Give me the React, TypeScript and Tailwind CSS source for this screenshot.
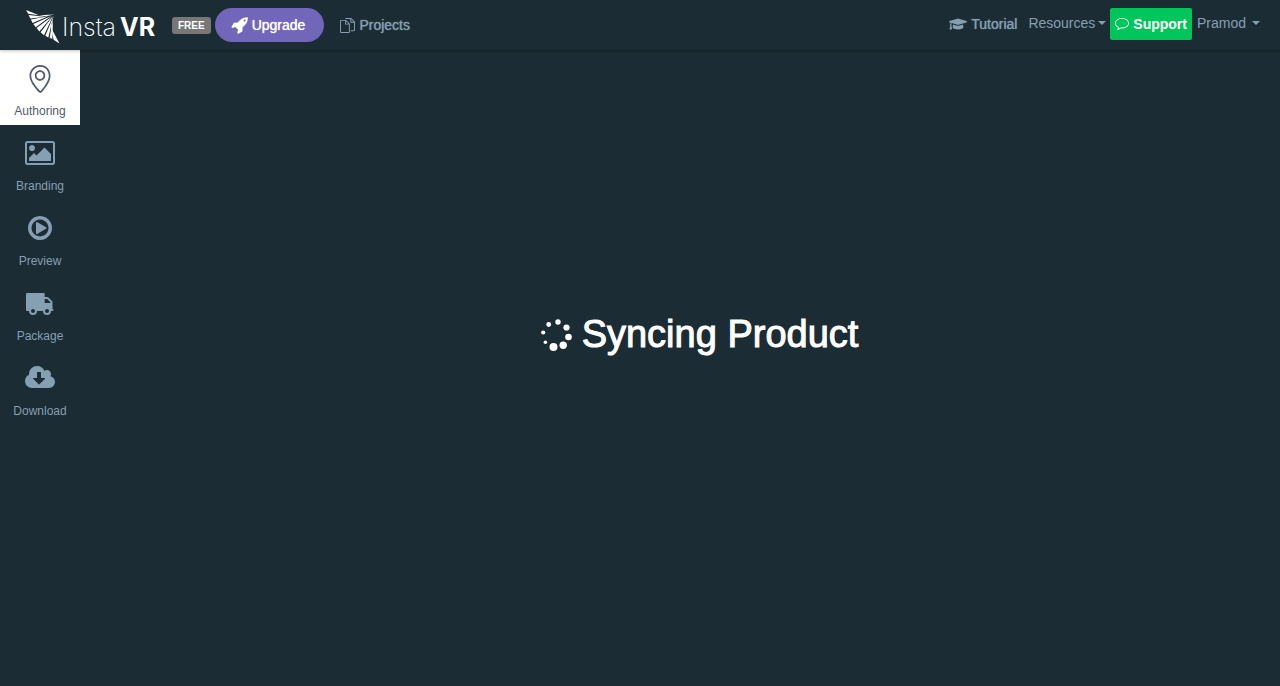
import type { ReactNode } from "react";
import { FaGraduationCap } from "react-icons/fa";
import { SlDocs, SlBubble, SlLocationPin } from "react-icons/sl";

function LogoMark() {
  return (
    <svg viewBox="0 0 34 34" className="h-[34px] w-[34px] shrink-0 fill-white" aria-hidden="true">
      <path d="M0 0 L13 5.200 L28.500 4.600 L20 6.300 L2.200 3.800 Z" />
      <path d="M2.600 4.900 L19 6.700 L4.400 8.600 Z" />
      <path d="M4.800 9.600 L22 6.300 L6.700 13 Z" />
      <path d="M7.400 14 L25 6 L9.700 17.200 Z" />
      <path d="M10.600 18 L26 6.500 L13.400 21.600 Z" />
      <path d="M14.600 22.200 L27 6 L18 25.300 Z" />
      <path d="M19.300 25.700 L27.500 6 L22.300 27.600 Z" />
      <path d="M23.600 27.800 L27 9 L26.300 29 Z" />
      <path d="M28.700 4.600 L25.700 13 L26.300 20 L33.500 33.500 L27.600 29.700 L24.800 16 Z" />
    </svg>
  );
}

function RocketIcon() {
  return (
    <svg viewBox="0 0 1664 1792" className="h-[18px] w-[17px] fill-current" aria-hidden="true">
      <path d="M1440 448q0-40-28-68t-68-28-68 28-28 68 28 68 68 28 68-28 28-68zm224-288q0 249-75.500 430.500t-253.500 360.500q-81 80-195 176l-20 379q-2 16-16 26l-384 224q-7 4-16 4-12 0-23-9l-64-64q-13-14-8-32l85-276-281-281-276 85q-3 1-9 1-14 0-23-9l-64-64q-17-19-5-39l224-384q10-14 26-16l379-20q96-114 176-195 188-187 358-258t431-71q14 0 24 9.500t10 22.500z" />
    </svg>
  );
}

function PictureIcon() {
  return (
    <svg viewBox="0 0 1920 1792" className="h-7 w-[30px] fill-current" aria-hidden="true">
      <path d="M640 576q0 80-56 136t-136 56-136-56-56-136 56-136 136-56 136 56 56 136zm1024 384v448h-1408v-192l320-320 160 160 512-512zm96-704h-1600q-13 0-22.5 9.5t-9.5 22.5v1216q0 13 9.5 22.5t22.5 9.5h1600q13 0 22.5-9.5t9.5-22.5v-1216q0-13-9.5-22.5t-22.5-9.5zm160 32v1216q0 66-47 113t-113 47h-1600q-66 0-113-47t-47-113v-1216q0-66 47-113t113-47h1600q66 0 113 47t47 113z" />
    </svg>
  );
}

function PlayIcon() {
  return (
    <svg viewBox="0 0 1792 1792" className="h-7 w-7 fill-current" aria-hidden="true">
      <path d="M1312 896q0 37-32 55l-544 320q-15 9-32 9-16 0-32-8-32-19-32-56v-640q0-37 32-56 33-18 64 1l544 320q32 18 32 55zm128 0q0-148-73-273t-198-198-273-73-273 73-198 198-73 273 73 273 198 198 273 73 273-73 198-198 73-273zm224 0q0 209-103 385.5t-279.5 279.5-385.5 103-385.5-103-279.5-279.5-103-385.5 103-385.5 279.5-279.5 385.5-103 385.5 103 279.5 279.5 103 385.5z" />
    </svg>
  );
}

function TruckIcon() {
  return (
    <svg viewBox="0 0 28 28" className="h-7 w-7 fill-current" aria-hidden="true">
      <path
        fillRule="evenodd"
        d="M1 4H17.800Q18.700 4 18.700 5V8H21Q22 8 22.700 8.700L25.800 11.800Q26.500 12.500 26.500 13.500V20Q27.500 20 27.500 21T26.500 22H25A4 4 0 0 1 17 22H11A4 4 0 0 1 3 22H1Q0 22 0 21V5Q0 4 1 4ZM18.700 10V14H24.600V13.500L21.500 10.200Q21.300 10 21 10ZM5 22A2 2 0 1 0 9 22A2 2 0 1 0 5 22ZM19 22A2 2 0 1 0 23 22A2 2 0 1 0 19 22Z"
      />
    </svg>
  );
}

function CloudIcon() {
  return (
    <svg viewBox="0 0 1920 1792" className="h-7 w-[30px] fill-current" aria-hidden="true">
      <path d="M1280 928q0-14-9-23t-23-9h-224v-352q0-13-9.500-22.500t-22.500-9.500h-192q-13 0-22.500 9.500t-9.500 22.500v352h-224q-13 0-22.500 9.500t-9.500 22.500q0 14 9 23l352 352q9 9 23 9t23-9l351-351q10-12 10-24zm640 224q0 159-112.500 271.500t-271.500 112.500h-1088q-185 0-316.500-131.500t-131.500-316.500q0-130 70-240t188-165q-2-30-2-43 0-212 150-362t362-150q156 0 285.500 87t188.500 231q71-62 166-62 106 0 181 75t75 181q0 76-41 138 130 31 213.500 135.500t83.500 238.500z" />
    </svg>
  );
}

function Spinner() {
  return (
    <svg viewBox="0 0 34 34" className="h-[34px] w-[34px] fill-white" aria-hidden="true">
      <circle cx="18" cy="5" r="2.700" />
      <circle cx="26.500" cy="10.500" r="3.100" />
      <circle cx="28.500" cy="20" r="3.300" />
      <circle cx="23.200" cy="28.300" r="3.700" />
      <circle cx="13.500" cy="30" r="4" />
      <circle cx="5.400" cy="25.200" r="1.800" />
      <circle cx="3.200" cy="15.500" r="2.100" />
      <circle cx="8.700" cy="7.500" r="2.400" />
    </svg>
  );
}

function Caret() {
  return (
    <span
      className="size-0 border-x-4 border-t-4 border-x-transparent border-t-current"
      aria-hidden="true"
    />
  );
}

const steps: { label: string; icon: ReactNode; active?: boolean }[] = [
  { label: "Authoring", icon: <SlLocationPin size={28} />, active: true },
  { label: "Branding", icon: <PictureIcon /> },
  { label: "Preview", icon: <PlayIcon /> },
  { label: "Package", icon: <TruckIcon /> },
  { label: "Download", icon: <CloudIcon /> },
];

export default function App() {
  return (
    <div className="flex min-h-screen flex-col bg-[#1c2c34] font-['Liberation_Sans',Arial,sans-serif] text-sm text-[#869fb2]">
      <header className="z-10 flex h-[50px] items-start justify-between pt-2 pr-5 pl-[26px] shadow-[0_1px_3px_rgba(0,0,0,0.25)]">
        <div className="flex h-[34px] items-center">
          <a href="#home" className="flex items-center gap-0.5 self-start pt-0.5 text-white">
            <LogoMark />
            <span className="flex w-[96px] gap-1 font-[Inter,sans-serif] text-[25px] leading-8">
              <span className="font-extralight">Insta</span>
              <span className="font-bold">VR</span>
            </span>
          </a>
          <span className="ml-[14px] rounded-[3px] bg-[#777] px-1.5 text-[10px] leading-[17px] font-bold text-white">
            FREE
          </span>
          <button
            type="button"
            className="ml-1 flex h-[34px] items-center gap-1 rounded-full bg-[#7266ba] pr-[19px] pl-4 text-white [text-shadow:0_0_1px_currentColor]"
          >
            <RocketIcon />
            Upgrade
          </button>
          <a href="#projects" className="ml-4 flex items-center gap-1 [text-shadow:0_0_1px_currentColor]">
            <SlDocs size={15} />
            Projects
          </a>
        </div>
        <nav className="flex h-8 items-center">
          <a href="#tutorial" className="flex items-center gap-1 [text-shadow:0_0_1px_currentColor]">
            <FaGraduationCap size={18} />
            Tutorial
          </a>
          <button type="button" className="ml-[11px] flex items-center gap-[3px] pb-0.5">
            Resources
            <Caret />
          </button>
          <button
            type="button"
            className="ml-1 flex h-8 items-center gap-1 rounded-[2px] bg-[#00c55b] px-[5px] font-bold text-white"
          >
            <SlBubble size={14} />
            Support
          </button>
          <button type="button" className="ml-[5px] flex items-center gap-1.5 pb-0.5">
            Pramod
            <Caret />
          </button>
        </nav>
      </header>
      <div className="flex flex-1">
        <nav className="flex w-20 flex-col">
          {steps.map((step) => (
            <a
              key={step.label}
              href={"#" + step.label.toLowerCase()}
              className={
                step.active
                  ? "flex h-[75px] flex-col items-center gap-2.5 bg-white pt-[15px] text-xs text-[#515d66]"
                  : "flex h-[75px] flex-col items-center gap-[11px] pt-[14px] text-xs"
              }
            >
              {step.icon}
              {step.label}
            </a>
          ))}
        </nav>
        <main className="flex flex-1 justify-center pt-[262px] pl-[38px]">
          <h1 className="flex h-11 items-center gap-2 text-[38px] text-white [-webkit-text-stroke:1px_currentColor]">
            <Spinner />
            Syncing Product
          </h1>
        </main>
      </div>
    </div>
  );
}
